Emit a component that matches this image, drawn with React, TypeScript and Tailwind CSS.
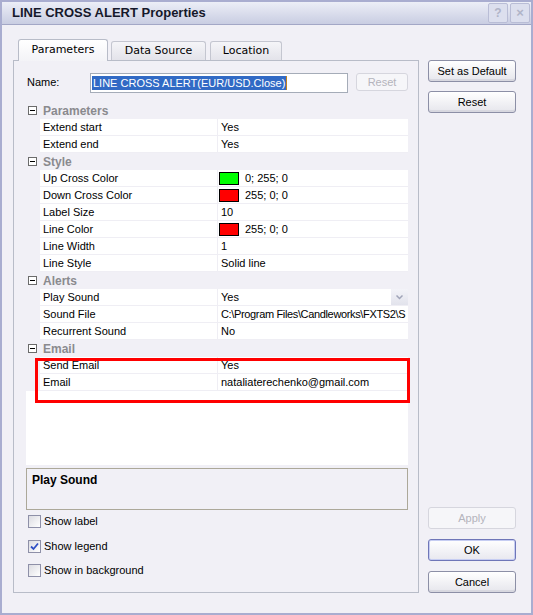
import React from 'react';

type Row =
  | { kind: 'cat'; label: string }
  | { kind: 'prop'; label: string; value: string; color?: string; dropdown?: boolean; tight?: boolean };

const ROWS: Row[] = [
  { kind: 'cat', label: 'Parameters' },
  { kind: 'prop', label: 'Extend start', value: 'Yes' },
  { kind: 'prop', label: 'Extend end', value: 'Yes' },
  { kind: 'cat', label: 'Style' },
  { kind: 'prop', label: 'Up Cross Color', value: '0; 255; 0', color: '#00ff00' },
  { kind: 'prop', label: 'Down Cross Color', value: '255; 0; 0', color: '#ff0000' },
  { kind: 'prop', label: 'Label Size', value: '10' },
  { kind: 'prop', label: 'Line Color', value: '255; 0; 0', color: '#ff0000' },
  { kind: 'prop', label: 'Line Width', value: '1' },
  { kind: 'prop', label: 'Line Style', value: 'Solid line' },
  { kind: 'cat', label: 'Alerts' },
  { kind: 'prop', label: 'Play Sound', value: 'Yes', dropdown: true },
  { kind: 'prop', label: 'Sound File', value: 'C:\\Program Files\\Candleworks\\FXTS2\\S', tight: true },
  { kind: 'prop', label: 'Recurrent Sound', value: 'No' },
  { kind: 'cat', label: 'Email' },
  { kind: 'prop', label: 'Send Email', value: 'Yes' },
  { kind: 'prop', label: 'Email', value: 'nataliaterechenko@gmail.com' },
];

const Minus = () => (
  <span className="flex h-[9px] w-[9px] items-center justify-center border border-[#6b6b6b] bg-white">
    <span className="h-px w-[5px] bg-black" />
  </span>
);

const XpButton: React.FC<{ label: string; disabled?: boolean; primary?: boolean; className?: string }> = ({
  label,
  disabled,
  primary,
  className = 'h-[22px] w-[88px]',
}) => (
  <div
    className={`flex shrink-0 items-center justify-center rounded-[3px] border text-[11px] ${
      disabled
        ? 'border-[#d6d6de] bg-[#f6f6f9] text-[#b4b4bc]'
        : primary
          ? 'border-[#6f76b8] bg-gradient-to-b from-white to-[#e8e8ef] text-black shadow-[inset_0_0_0_1px_#c6cdf2]'
          : 'border-[#8c8fa6] bg-gradient-to-b from-white to-[#e6e6ec] text-black shadow-[inset_0_-2px_0_#d8d8e0]'
    } ${className}`}
  >
    {label}
  </div>
);

const Check: React.FC<{ label: string; checked?: boolean; className?: string }> = ({ label, checked, className = '' }) => (
  <div className={`flex h-[13px] items-center ${className}`}>
    <span className="ml-[2px] flex h-[13px] w-[13px] items-center justify-center border border-[#8e90a8] bg-gradient-to-br from-[#dcdce2] to-white">
      {checked && (
        <svg width="9" height="9" viewBox="0 0 9 9">
          <path d="M1 4.5 L3.5 7 L8 1.5" fill="none" stroke="#2f4fc4" strokeWidth="1.8" />
        </svg>
      )}
    </span>
    <span className="ml-[3px] text-[11px] text-black">{label}</span>
  </div>
);

export default function App() {
  return (
    <div className="relative h-[615px] w-[533px] overflow-hidden border-2 border-[#a9add0] bg-[#f1f0f6] font-['Liberation_Sans',Arial,sans-serif] text-[11px] text-black">
      {/* title bar */}
      <div className="flex h-[23px] items-center border-b border-[#a3a7c6] bg-gradient-to-b from-[#eceef7] to-[#c9cde2] pl-[10px] pr-[1px]">
        <span className="text-[13px] font-bold text-[#15182a]">LINE CROSS ALERT Properties</span>
        <div className="ml-auto flex gap-[2px]">
          <span className="flex h-[20px] w-[20px] items-center justify-center rounded-[2px] border border-[#b9bdd6] bg-[#dcdfee] text-[12px] font-bold text-[#b0b4c8]">
            ?
          </span>
          <span className="flex h-[20px] w-[20px] items-center justify-center rounded-[2px] border border-[#b9bdd6] bg-[#dcdfee] text-[13px] font-bold text-[#b0b4c8]">
            ×
          </span>
        </div>
      </div>

      <div className="flex">
        {/* left: tabs + panel */}
        <div className="ml-[11px] flex w-[406px] flex-col pt-[14px]">
          <div className="relative z-10 flex h-[21px] items-end pl-[5px] font-['DejaVu_Sans',Verdana,sans-serif] text-[11px]">
            <div className="-mb-px flex h-[22px] w-[90px] items-center justify-center rounded-t-[3px] border border-b-0 border-[#b8bcc8] bg-gradient-to-b from-white to-[#f3f3f7] pb-[1px]">
              Parameters
            </div>
            <div className="ml-[3px] flex h-[19px] w-[95px] items-center justify-center rounded-t-[3px] border border-b-0 border-[#c4c6d0] bg-gradient-to-b from-[#f5f5f8] to-[#e3e3ea]">
              Data Source
            </div>
            <div className="ml-[4px] flex h-[19px] w-[72px] items-center justify-center rounded-t-[3px] border border-b-0 border-[#c4c6d0] bg-gradient-to-b from-[#f5f5f8] to-[#e3e3ea]">
              Location
            </div>
          </div>

          <div className="flex h-[533px] flex-col border border-[#b8bcc8] bg-[#f1f0f6] pl-[12px] pr-[10px] pt-[12px]">
            {/* name row */}
            <div className="flex h-[20px] items-center">
              <span className="ml-[1px] w-[63px] shrink-0 self-start pt-[1px]">Name:</span>
              <div className="flex h-[20px] w-[258px] shrink-0 items-center border border-[#a5acb8] bg-white pl-[1px]">
                <span className="bg-[#316ac5] px-px leading-[14px] text-white">LINE CROSS ALERT(EUR/USD.Close)</span>
                <span className="h-[14px] w-px bg-[#c08020]" />
              </div>
              <XpButton label="Reset" disabled className="ml-[8px] h-[18px] w-[52px] self-start" />
            </div>

            {/* property grid */}
            <div className="mt-[9px] flex h-[363px] flex-col bg-white">
              {ROWS.map((r, i) =>
                r.kind === 'cat' ? (
                  <div key={i} className="flex h-[17px] shrink-0 items-center bg-[#f1f0f6]">
                    <span className="ml-[2px] mr-[5px] flex w-[9px]">
                      <Minus />
                    </span>
                    <span className="pl-[1px] text-[12px] font-bold text-[#8a8a8e]">{r.label}</span>
                  </div>
                ) : (
                  <div key={i} className="flex h-[17px] shrink-0">
                    <div className="w-[14px] shrink-0 bg-[#f1f0f6]" />
                    <div className="flex min-w-0 flex-1 border-b border-[#efeef4] bg-white">
                      <div className="flex w-[178px] shrink-0 items-center border-r border-[#efeef4] pl-[3px]">
                        {r.label}
                      </div>
                      <div className="flex min-w-0 flex-1 items-center overflow-hidden whitespace-nowrap pl-[1px]">
                        {r.color ? (
                          <>
                            <span
                              className="h-[13px] w-[20px] shrink-0 border border-black"
                              style={{ backgroundColor: r.color }}
                            />
                            <span className="ml-[6px]">{r.value}</span>
                          </>
                        ) : (
                          <span className={r.tight ? 'pl-[2px] tracking-[-0.35px]' : 'pl-[2px]'}>{r.value}</span>
                        )}
                        {r.dropdown && (
                          <span className="ml-auto flex h-[16px] w-[17px] shrink-0 items-center justify-center bg-gradient-to-b from-[#f3f3f8] to-[#e2e3ec]">
                            <svg width="7" height="5" viewBox="0 0 7 5">
                              <path d="M0.5 0.5 L3.5 3.5 L6.5 0.5" fill="none" stroke="#a0a4b8" strokeWidth="1.5" />
                            </svg>
                          </span>
                        )}
                      </div>
                    </div>
                  </div>
                )
              )}
            </div>

            {/* description */}
            <div className="mt-[3px] h-[42px] shrink-0 border border-[#aca899] bg-[#f1f0f6] pl-[5px] pt-[2px]">
              <span className="text-[12px] font-bold">Play Sound</span>
            </div>

            <Check label="Show label" className="mt-[5px]" />
            <Check label="Show legend" checked className="mt-[12px]" />
            <Check label="Show in background" className="mt-[11px]" />
          </div>
        </div>

        {/* right buttons */}
        <div className="ml-[9px] flex flex-col pt-[35px]">
          <XpButton label="Set as Default" />
          <XpButton label="Reset" className="mt-[9px] h-[22px] w-[88px]" />
          <XpButton label="Apply" disabled className="mt-[394px] h-[22px] w-[88px]" />
          <XpButton label="OK" primary className="mt-[10px] h-[22px] w-[88px]" />
          <XpButton label="Cancel" className="mt-[10px] h-[22px] w-[88px]" />
        </div>
      </div>

      {/* annotation */}
      <div className="absolute left-[33px] top-[356px] h-[45px] w-[375px] border-[3px] border-[#ff0000]" />
    </div>
  );
}
